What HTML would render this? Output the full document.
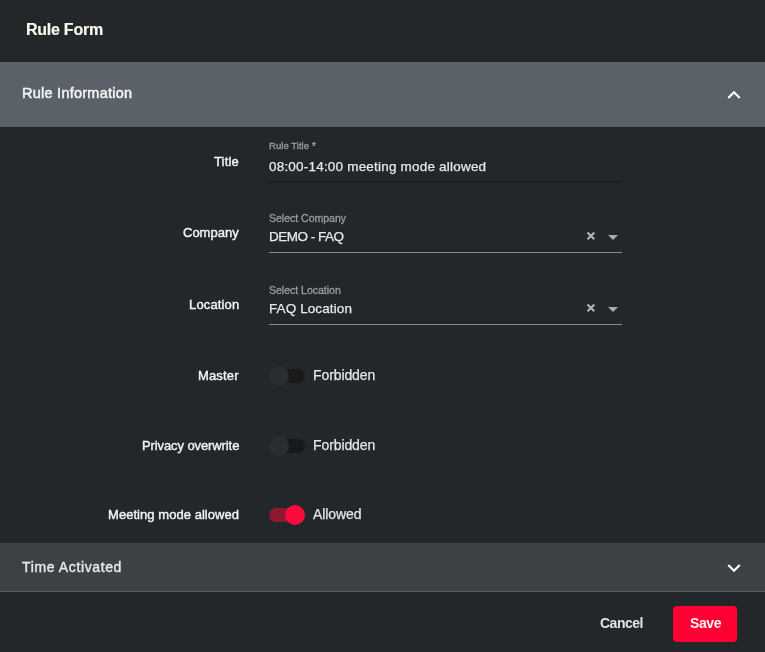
<!DOCTYPE html>
<html><head><meta charset="utf-8">
<style>
html,body{margin:0;padding:0;}
body{-webkit-font-smoothing:antialiased;width:765px;height:652px;overflow:hidden;background:#23272a;font-family:"Liberation Sans",sans-serif;position:relative;}
.a{position:absolute;white-space:nowrap;line-height:1;}
div{will-change:transform;}
.band1{position:absolute;left:0;top:62px;width:765px;height:65px;background:#5b6168;}
.band2{position:absolute;left:0;top:543px;width:765px;height:48px;background:#3d4144;border-bottom:1px solid #575b5e;}
.lbl{position:absolute;right:526px;font-size:13px;color:#f4f4f4;-webkit-text-stroke:0.4px #f4f4f4;letter-spacing:0.15px;white-space:nowrap;line-height:1;}
.flbl{position:absolute;left:269px;font-size:10.5px;color:#9c9e9f;-webkit-text-stroke:0.3px #9c9e9f;white-space:nowrap;line-height:1;}
.val{position:absolute;left:269px;font-size:13.5px;color:#e8e8e8;-webkit-text-stroke:0.25px #e8e8e8;white-space:nowrap;line-height:1;}
.ul{position:absolute;left:269px;width:353px;height:1px;}
.track{position:absolute;left:269px;width:36px;height:14px;border-radius:7px;}
.thumb{position:absolute;width:20px;height:20px;border-radius:50%;}
.ttext{position:absolute;left:312.6px;letter-spacing:-0.1px;font-size:14px;color:#e6e6e6;-webkit-text-stroke:0.25px #e6e6e6;white-space:nowrap;line-height:1;}
</style></head>
<body>
<div class="a" style="left:26px;top:22px;font-size:16px;font-weight:bold;color:#faf8ec;letter-spacing:-0.25px;-webkit-text-stroke:0.2px #faf8ec;">Rule Form</div>

<div class="band1"></div>
<div class="a" style="left:21.6px;top:86.4px;font-size:14.5px;color:#f4f4f4;-webkit-text-stroke:0.5px #f4f4f4;letter-spacing:0.25px;">Rule Information</div>
<svg style="position:absolute;left:721.2px;top:82px" width="26" height="26" viewBox="0 0 24 24"><path fill="#ffffff" d="M7.41,15.41L12,10.83L16.59,15.41L18,14L12,8L6,14L7.41,15.41Z"/></svg>

<!-- Title row -->
<div class="lbl" style="top:154.5px">Title</div>
<div class="flbl" style="top:140.5px;font-size:9.5px;letter-spacing:0.05px">Rule Title <span style="font-size:10.5px;line-height:0;position:relative;top:0.5px">*</span></div>
<div class="val" style="top:160px;letter-spacing:0.2px">08:00-14:00 meeting mode allowed</div>
<div class="ul" style="top:181px;background:#161819"></div>

<!-- Company row -->
<div class="lbl" style="top:226px;letter-spacing:0">Company</div>
<div class="flbl" style="top:213px">Select Company</div>
<div class="val" style="top:230px;letter-spacing:-0.5px">DEMO - FAQ</div>
<svg style="position:absolute;left:583.1px;top:228.2px" width="16" height="16" viewBox="0 0 16 16"><path d="M4.5,4.5L11.3,11.3M11.3,4.5L4.5,11.3" stroke="#b4b4b4" stroke-width="2.1"/></svg>
<svg style="position:absolute;left:608px;top:235px" width="10" height="5" viewBox="0 0 10 5"><path d="M0,0L10,0L5,5Z" fill="#aaaaaa"/></svg>
<div class="ul" style="top:252px;background:#8c8c8c"></div>

<!-- Location row -->
<div class="lbl" style="top:298px">Location</div>
<div class="flbl" style="top:285px">Select Location</div>
<div class="val" style="top:302px;letter-spacing:0.1px">FAQ Location</div>
<svg style="position:absolute;left:583.1px;top:300.4px" width="16" height="16" viewBox="0 0 16 16"><path d="M4.5,4.5L11.3,11.3M11.3,4.5L4.5,11.3" stroke="#b4b4b4" stroke-width="2.1"/></svg>
<svg style="position:absolute;left:608px;top:307px" width="10" height="5" viewBox="0 0 10 5"><path d="M0,0L10,0L5,5Z" fill="#aaaaaa"/></svg>
<div class="ul" style="top:324px;background:#8c8c8c"></div>

<!-- Master -->
<div class="lbl" style="top:369px">Master</div>
<div class="track" style="top:369px;background:#18191a"></div>
<div class="thumb" style="left:269px;top:365.5px;background:#2b2e30"></div>
<div class="ttext" style="top:368px">Forbidden</div>

<!-- Privacy -->
<div class="lbl" style="top:439px;letter-spacing:-0.1px">Privacy overwrite</div>
<div class="track" style="top:439px;background:#18191a"></div>
<div class="thumb" style="left:269px;top:435.5px;background:#2b2e30"></div>
<div class="ttext" style="top:438px">Forbidden</div>

<!-- Meeting -->
<div class="lbl" style="top:508px;letter-spacing:0.05px">Meeting mode allowed</div>
<div class="track" style="top:508px;background:#8b1a2e"></div>
<div class="thumb" style="left:285px;top:505px;background:#ff0a3c"></div>
<div class="ttext" style="top:507px">Allowed</div>

<div class="band2"></div>
<div class="a" style="left:22px;top:560px;font-size:14px;color:#e8e8e8;-webkit-text-stroke:0.4px #e8e8e8;letter-spacing:0.62px;">Time Activated</div>
<svg style="position:absolute;left:721.2px;top:554.8px" width="26" height="26" viewBox="0 0 24 24"><path fill="#ffffff" d="M7.41,8.58L12,13.17L16.59,8.58L18,10L12,16L6,10L7.41,8.58Z"/></svg>

<div class="a" style="left:599.5px;top:616px;font-size:14px;font-weight:bold;color:#e3e3e3;letter-spacing:-0.5px;">Cancel</div>
<div style="position:absolute;left:673px;top:606px;width:64px;height:36px;border-radius:4px;background:#ff0033;"></div>
<div class="a" style="left:690px;top:616px;font-size:14px;font-weight:bold;color:#fff0f2;letter-spacing:-0.4px;">Save</div>
</body></html>
